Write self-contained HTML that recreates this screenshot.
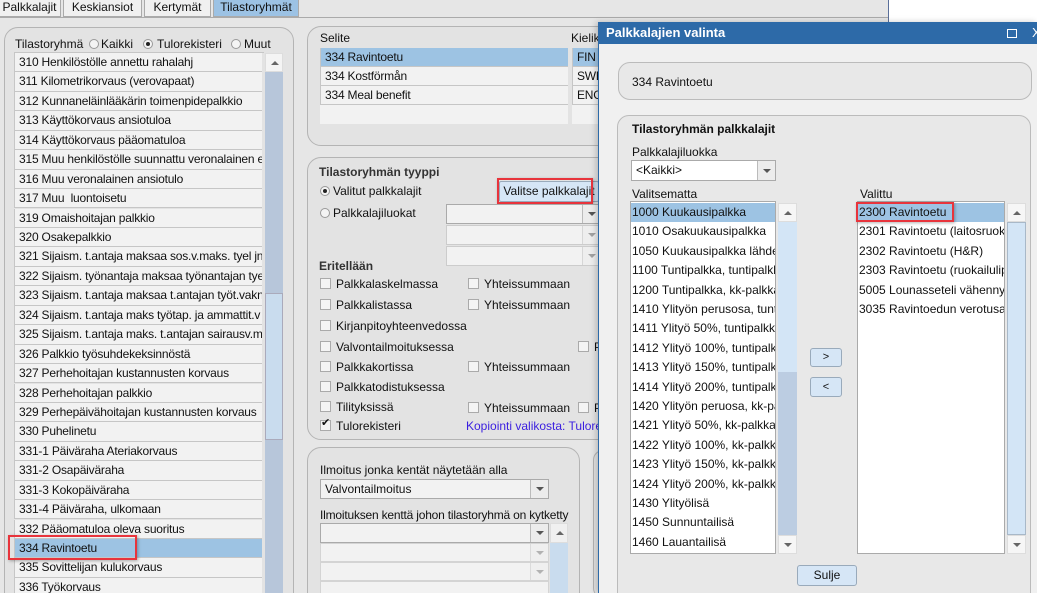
<!DOCTYPE html>
<html><head><meta charset="utf-8"><style>
*{box-sizing:border-box;margin:0;padding:0}
html{width:1037px;height:593px;overflow:hidden}
body{width:1037px;height:593px;overflow:hidden;background:#e6e6e6;font-family:"Liberation Sans",Arial,sans-serif;font-size:12px;color:#111;position:relative}
.a{position:absolute}
.tab{position:absolute;top:0;height:17px;border:1px solid #aaa;border-top:none;background:#f0f0f0;text-align:center;line-height:14px;font-size:12px}
.panel{position:absolute;border:1px solid #b4b4b4;border-radius:14px;background:#e3e3e3}
.row{position:absolute;left:0;width:248px;height:19.4px;border-bottom:1px solid #c6c6c6;border-left:1px solid #c6c6c6;background:#f2f2f2;padding-left:4px;line-height:18px;white-space:nowrap;overflow:hidden;letter-spacing:-0.2px}
.sel{background:#9dc3e3}
.red{position:absolute;border:2px solid #e8343c;box-shadow:1px 1px 3px rgba(0,0,0,.3)}
.cb{position:absolute;width:11px;height:11px;border:1px solid #aaa;background:#f4f4f4}
.t{position:absolute;white-space:nowrap}
.rad{position:absolute;width:10px;height:10px;border:1px solid #999;border-radius:50%;background:#f4f4f4}
.combo{position:absolute;border:1px solid #aaa;background:#f2f2f2}
.arr{position:absolute;right:0;top:0;bottom:0;width:18px;border-left:1px solid #bbb;background:#ececec}
.arr:after{content:"";position:absolute;left:5px;top:50%;margin-top:-2px;border-left:4px solid transparent;border-right:4px solid transparent;border-top:4px solid #555}
.drow{position:absolute;left:0;height:19.4px;line-height:19px;white-space:nowrap;overflow:hidden;padding-left:1px;width:100%;font-size:12px}
.up:after{content:"";position:absolute;left:5px;top:7px;border-left:4px solid transparent;border-right:4px solid transparent;border-bottom:4px solid #666}
.dn:after{content:"";position:absolute;left:5px;top:7px;border-left:4px solid transparent;border-right:4px solid transparent;border-top:4px solid #666}
.btn{position:absolute;border:1px solid #9ab;border-radius:3px;background:#d6e6f6;text-align:center}
</style></head><body>
<div class="a" style="left:888px;top:0;width:149px;height:22px;background:#fff;border-left:1px solid #5a6f9a"></div>
<div class="a" style="left:0;top:17px;width:888px;height:1px;background:#aaa"></div>
<div class="tab" style="left:-2px;width:63px">Palkkalajit</div>
<div class="tab" style="left:63px;width:79px">Keskiansiot</div>
<div class="tab" style="left:144px;width:67px">Kertymät</div>
<div class="tab" style="left:213px;width:86px;background:#9cc2e4">Tilastoryhmät</div>

<div class="panel" style="left:4px;top:27px;width:290px;height:580px"></div>
<div class="t" style="left:15px;top:37px">Tilastoryhmä</div>
<div class="rad" style="left:89px;top:39px"></div><div class="t" style="left:101px;top:37px">Kaikki</div>
<div class="rad" style="left:143px;top:39px"></div><div class="a" style="left:146px;top:42px;width:4px;height:4px;border-radius:50%;background:#222"></div><div class="t" style="left:157px;top:37px">Tulorekisteri</div>
<div class="rad" style="left:231px;top:39px"></div><div class="t" style="left:244px;top:37px">Muut</div>

<div class="a" style="left:14px;top:52px;width:250px;height:541px;border-top:1px solid #c6c6c6;overflow:hidden">
<div class="row" style="top:0">310 Henkilöstölle annettu rahalahj</div>
<div class="row" style="top:19.4px">311 Kilometrikorvaus (verovapaat)</div>
<div class="row" style="top:38.9px">312 Kunnaneläinlääkärin toimenpidepalkkio</div>
<div class="row" style="top:58.3px">313 Käyttökorvaus ansiotuloa</div>
<div class="row" style="top:77.8px">314 Käyttökorvaus pääomatuloa</div>
<div class="row" style="top:97.2px">315 Muu henkilöstölle suunnattu veronalainen e</div>
<div class="row" style="top:116.6px">316 Muu veronalainen ansiotulo</div>
<div class="row" style="top:136.1px">317 Muu &nbsp;luontoisetu</div>
<div class="row" style="top:155.5px">319 Omaishoitajan palkkio</div>
<div class="row" style="top:175px">320 Osakepalkkio</div>
<div class="row" style="top:194.4px">321 Sijaism. t.antaja maksaa sos.v.maks. tyel jn</div>
<div class="row" style="top:213.8px">322 Sijaism. työnantaja maksaa työnantajan tye</div>
<div class="row" style="top:233.3px">323 Sijaism. t.antaja maksaa t.antajan työt.vakn</div>
<div class="row" style="top:252.7px">324 Sijaism. t.antaja maks työtap. ja ammattit.v</div>
<div class="row" style="top:272.2px">325 Sijaism. t.antaja maks. t.antajan sairausv.m</div>
<div class="row" style="top:291.6px">326 Palkkio työsuhdekeksinnöstä</div>
<div class="row" style="top:311px">327 Perhehoitajan kustannusten korvaus</div>
<div class="row" style="top:330.5px">328 Perhehoitajan palkkio</div>
<div class="row" style="top:349.9px">329 Perhepäivähoitajan kustannusten korvaus</div>
<div class="row" style="top:369.4px">330 Puhelinetu</div>
<div class="row" style="top:388.8px">331-1 Päiväraha Ateriakorvaus</div>
<div class="row" style="top:408.2px">331-2 Osapäiväraha</div>
<div class="row" style="top:427.7px">331-3 Kokopäiväraha</div>
<div class="row" style="top:447.1px">331-4 Päiväraha, ulkomaan</div>
<div class="row" style="top:466.6px">332 Pääomatuloa oleva suoritus</div>
<div class="row sel" style="top:486px">334 Ravintoetu</div>
<div class="row" style="top:505.4px">335 Sovittelijan kulukorvaus</div>
<div class="row" style="top:524.9px">336 Työkorvaus</div>
</div>
<div class="a up" style="left:265px;top:53px;width:18px;height:19px;background:#f4f4f4;border:1px solid #ddd"></div>
<div class="a" style="left:265px;top:72px;width:18px;height:521px;background:#b7c6da"></div>
<div class="a" style="left:265px;top:293px;width:18px;height:147px;background:#c9dcee;border:1px solid #aab"></div>
<div class="red" style="left:8px;top:535px;width:129px;height:25px"></div>

<div class="panel" style="left:307px;top:26px;width:320px;height:120px"></div>
<div class="t" style="left:320px;top:31px">Selite</div>
<div class="t" style="left:571px;top:31px">Kieliko</div>
<div class="a" style="left:320px;top:48px;width:248px;height:76px;background:#f2f2f2">
<div class="row sel" style="width:248px;top:0">334 Ravintoetu</div>
<div class="row" style="width:248px;top:19px">334 Kostförmån</div>
<div class="row" style="width:248px;top:38px">334 Meal benefit</div>
</div>
<div class="a" style="left:572px;top:48px;width:40px;height:76px;background:#f2f2f2">
<div class="row sel" style="width:40px;top:0">FIN -</div>
<div class="row" style="width:40px;top:19px">SWE</div>
<div class="row" style="width:40px;top:38px">ENG</div>
</div>

<div class="panel" style="left:307px;top:157px;width:320px;height:283px"></div>
<div class="t" style="left:319px;top:165px;font-weight:bold;color:#333">Tilastoryhmän tyyppi</div>
<div class="rad" style="left:320px;top:186px"></div><div class="a" style="left:323px;top:189px;width:4px;height:4px;border-radius:50%;background:#222"></div>
<div class="t" style="left:333px;top:184px">Valitut palkkalajit</div>
<div class="btn" style="left:499px;top:181px;width:100px;height:21px;line-height:19px;border-radius:2px">Valitse palkkalajit</div>
<div class="red" style="left:497px;top:178px;width:96px;height:26px"></div>
<div class="rad" style="left:320px;top:208px"></div><div class="t" style="left:333px;top:206px">Palkkalajiluokat</div>
<div class="combo" style="left:446px;top:204px;width:155px;height:20px"><div class="arr"></div></div>
<div class="combo" style="left:446px;top:225px;width:155px;height:20px;border-color:#ccc"><div class="arr" style="opacity:.5"></div></div>
<div class="combo" style="left:446px;top:246px;width:155px;height:20px;border-color:#ccc"><div class="arr" style="opacity:.5"></div></div>
<div class="t" style="left:319px;top:259px;font-weight:bold;color:#333">Eritellään</div>
<div class="cb" style="left:320px;top:278px"></div><div class="t" style="left:336px;top:277px">Palkkalaskelmassa</div>
<div class="cb" style="left:468px;top:278px"></div><div class="t" style="left:484px;top:277px">Yhteissummaan</div>
<div class="cb" style="left:320px;top:299px"></div><div class="t" style="left:336px;top:298px">Palkkalistassa</div>
<div class="cb" style="left:468px;top:299px"></div><div class="t" style="left:484px;top:298px">Yhteissummaan</div>
<div class="cb" style="left:320px;top:320px"></div><div class="t" style="left:336px;top:319px">Kirjanpitoyhteenvedossa</div>
<div class="cb" style="left:320px;top:341px"></div><div class="t" style="left:336px;top:340px">Valvontailmoituksessa</div>
<div class="cb" style="left:578px;top:341px"></div><div class="t" style="left:594px;top:340px">P</div>
<div class="cb" style="left:320px;top:361px"></div><div class="t" style="left:336px;top:360px">Palkkakortissa</div>
<div class="cb" style="left:468px;top:361px"></div><div class="t" style="left:484px;top:360px">Yhteissummaan</div>
<div class="cb" style="left:320px;top:381px"></div><div class="t" style="left:336px;top:380px">Palkkatodistuksessa</div>
<div class="cb" style="left:320px;top:401px"></div><div class="t" style="left:336px;top:400px">Tilityksissä</div>
<div class="cb" style="left:468px;top:402px"></div><div class="t" style="left:484px;top:401px">Yhteissummaan</div>
<div class="cb" style="left:578px;top:402px"></div><div class="t" style="left:594px;top:401px">P</div>
<div class="cb" style="left:320px;top:420px"></div><div class="t" style="left:321px;top:416px;font-size:11px">✔</div><div class="t" style="left:336px;top:419px">Tulorekisteri</div>
<div class="t" style="left:466px;top:419px;color:#3a1ee0">Kopiointi valikosta: Tulorek</div>

<div class="panel" style="left:307px;top:447px;width:273px;height:160px"></div>
<div class="panel" style="left:593px;top:450px;width:20px;height:148px"></div>
<div class="t" style="left:320px;top:463px">Ilmoitus jonka kentät näytetään alla</div>
<div class="combo" style="left:320px;top:479px;width:229px;height:20px;padding-left:4px;line-height:18px">Valvontailmoitus<div class="arr"></div></div>
<div class="t" style="left:320px;top:508px;letter-spacing:-0.2px">Ilmoituksen kenttä johon tilastoryhmä on kytketty</div>
<div class="combo" style="left:320px;top:523px;width:229px;height:20px"><div class="arr"></div></div>
<div class="combo" style="left:320px;top:543px;width:229px;height:19px;border-color:#d4d4d4"><div class="arr" style="opacity:.4"></div></div>
<div class="combo" style="left:320px;top:562px;width:229px;height:19px;border-color:#d4d4d4"><div class="arr" style="opacity:.4"></div></div>
<div class="combo" style="left:320px;top:581px;width:229px;height:12px;border-color:#d4d4d4;border-bottom:none"></div>
<div class="a up" style="left:550px;top:523px;width:18px;height:20px;background:#f0f0f0;border:1px solid #ddd"></div>
<div class="a" style="left:550px;top:543px;width:18px;height:50px;background:#c9dcee"></div>

<!-- dialog -->
<div class="a" style="left:598px;top:22px;width:439px;height:571px;background:#f0f0f0;border-left:1px solid #2d6aa8;box-shadow:-2px 0 6px rgba(0,0,0,.2)"></div>
<div class="a" style="left:598px;top:22px;width:439px;height:22px;background:#2d6aa8"></div>
<div class="t" style="left:606px;top:25px;color:#fff;font-weight:bold;font-size:13px">Palkkalajien valinta</div>
<div class="a" style="left:1007px;top:29px;width:10px;height:9px;border:1.5px solid #fff"></div>
<div class="t" style="left:1032px;top:25px;color:#fff;font-size:13px">X</div>
<div class="a" style="left:618px;top:62px;width:414px;height:38px;border:1px solid #bbb;border-radius:12px;background:#e8e8e8"></div>
<div class="t" style="left:632px;top:75px">334 Ravintoetu</div>
<div class="a" style="left:617px;top:115px;width:414px;height:490px;border:1px solid #bbb;border-radius:12px;background:#e8e8e8"></div>
<div class="t" style="left:632px;top:122px;font-weight:bold">Tilastoryhmän palkkalajit</div>
<div class="t" style="left:632px;top:145px">Palkkalajiluokka</div>
<div class="combo" style="left:631px;top:160px;width:145px;height:21px;background:#fff;padding-left:4px;line-height:19px">&lt;Kaikki&gt;<div class="arr"></div></div>
<div class="t" style="left:632px;top:187px">Valitsematta</div>
<div class="t" style="left:860px;top:187px">Valittu</div>
<div class="a" style="left:630px;top:201px;width:146px;height:353px;background:#fff;border:1px solid #aaa;overflow:hidden">
<div class="drow sel" style="top:1px">1000 Kuukausipalkka</div>
<div class="drow" style="top:20.4px">1010 Osakuukausipalkka</div>
<div class="drow" style="top:39.8px">1050 Kuukausipalkka lähdev</div>
<div class="drow" style="top:59.2px">1100 Tuntipalkka, tuntipalkka</div>
<div class="drow" style="top:78.6px">1200 Tuntipalkka, kk-palkkai</div>
<div class="drow" style="top:98px">1410 Ylityön perusosa, tuntip</div>
<div class="drow" style="top:117.4px">1411 Ylityö 50%, tuntipalkka</div>
<div class="drow" style="top:136.8px">1412 Ylityö 100%, tuntipalkk</div>
<div class="drow" style="top:156.2px">1413 Ylityö 150%, tuntipalkk</div>
<div class="drow" style="top:175.6px">1414 Ylityö 200%, tuntipalkk</div>
<div class="drow" style="top:195px">1420 Ylityön peruosa, kk-pal</div>
<div class="drow" style="top:214.4px">1421 Ylityö 50%, kk-palkkais</div>
<div class="drow" style="top:233.8px">1422 Ylityö 100%, kk-palkka</div>
<div class="drow" style="top:253.2px">1423 Ylityö 150%, kk-palkka</div>
<div class="drow" style="top:272.6px">1424 Ylityö 200%, kk-palkka</div>
<div class="drow" style="top:292px">1430 Ylityölisä</div>
<div class="drow" style="top:311.4px">1450 Sunnuntailisä</div>
<div class="drow" style="top:330.8px">1460 Lauantailisä</div>
</div>
<div class="a up" style="left:778px;top:203px;width:19px;height:19px;background:#f6f6f6;border:1px solid #ddd"></div>
<div class="a" style="left:778px;top:222px;width:19px;height:150px;background:#d3e5f6"></div>
<div class="a" style="left:778px;top:372px;width:19px;height:163px;background:#bccde2"></div>
<div class="a dn" style="left:778px;top:535px;width:19px;height:19px;background:#f6f6f6;border:1px solid #ddd"></div>
<div class="btn" style="left:810px;top:348px;width:32px;height:19px;line-height:17px;font-size:11px">&gt;</div>
<div class="btn" style="left:810px;top:377px;width:32px;height:20px;line-height:18px;font-size:11px">&lt;</div>
<div class="a" style="left:857px;top:201px;width:148px;height:353px;background:#fff;border:1px solid #aaa;overflow:hidden">
<div class="drow sel" style="top:1px">2300 Ravintoetu</div>
<div class="drow" style="top:20.4px">2301 Ravintoetu (laitosruoka</div>
<div class="drow" style="top:39.8px">2302 Ravintoetu (H&amp;R)</div>
<div class="drow" style="top:59.2px">2303 Ravintoetu (ruokailulipu</div>
<div class="drow" style="top:78.6px">5005 Lounasseteli vähennys</div>
<div class="drow" style="top:98px">3035 Ravintoedun verotusar</div>
</div>
<div class="red" style="left:856px;top:202px;width:98px;height:20px"></div>
<div class="a up" style="left:1007px;top:203px;width:19px;height:19px;background:#f6f6f6;border:1px solid #ddd"></div>
<div class="a" style="left:1007px;top:222px;width:19px;height:313px;background:#d3e5f6;border:1px solid #a8b8c8"></div>
<div class="a dn" style="left:1007px;top:535px;width:19px;height:19px;background:#f6f6f6;border:1px solid #ddd"></div>
<div class="btn" style="left:797px;top:565px;width:60px;height:21px;line-height:19px">Sulje</div>
</body></html>
